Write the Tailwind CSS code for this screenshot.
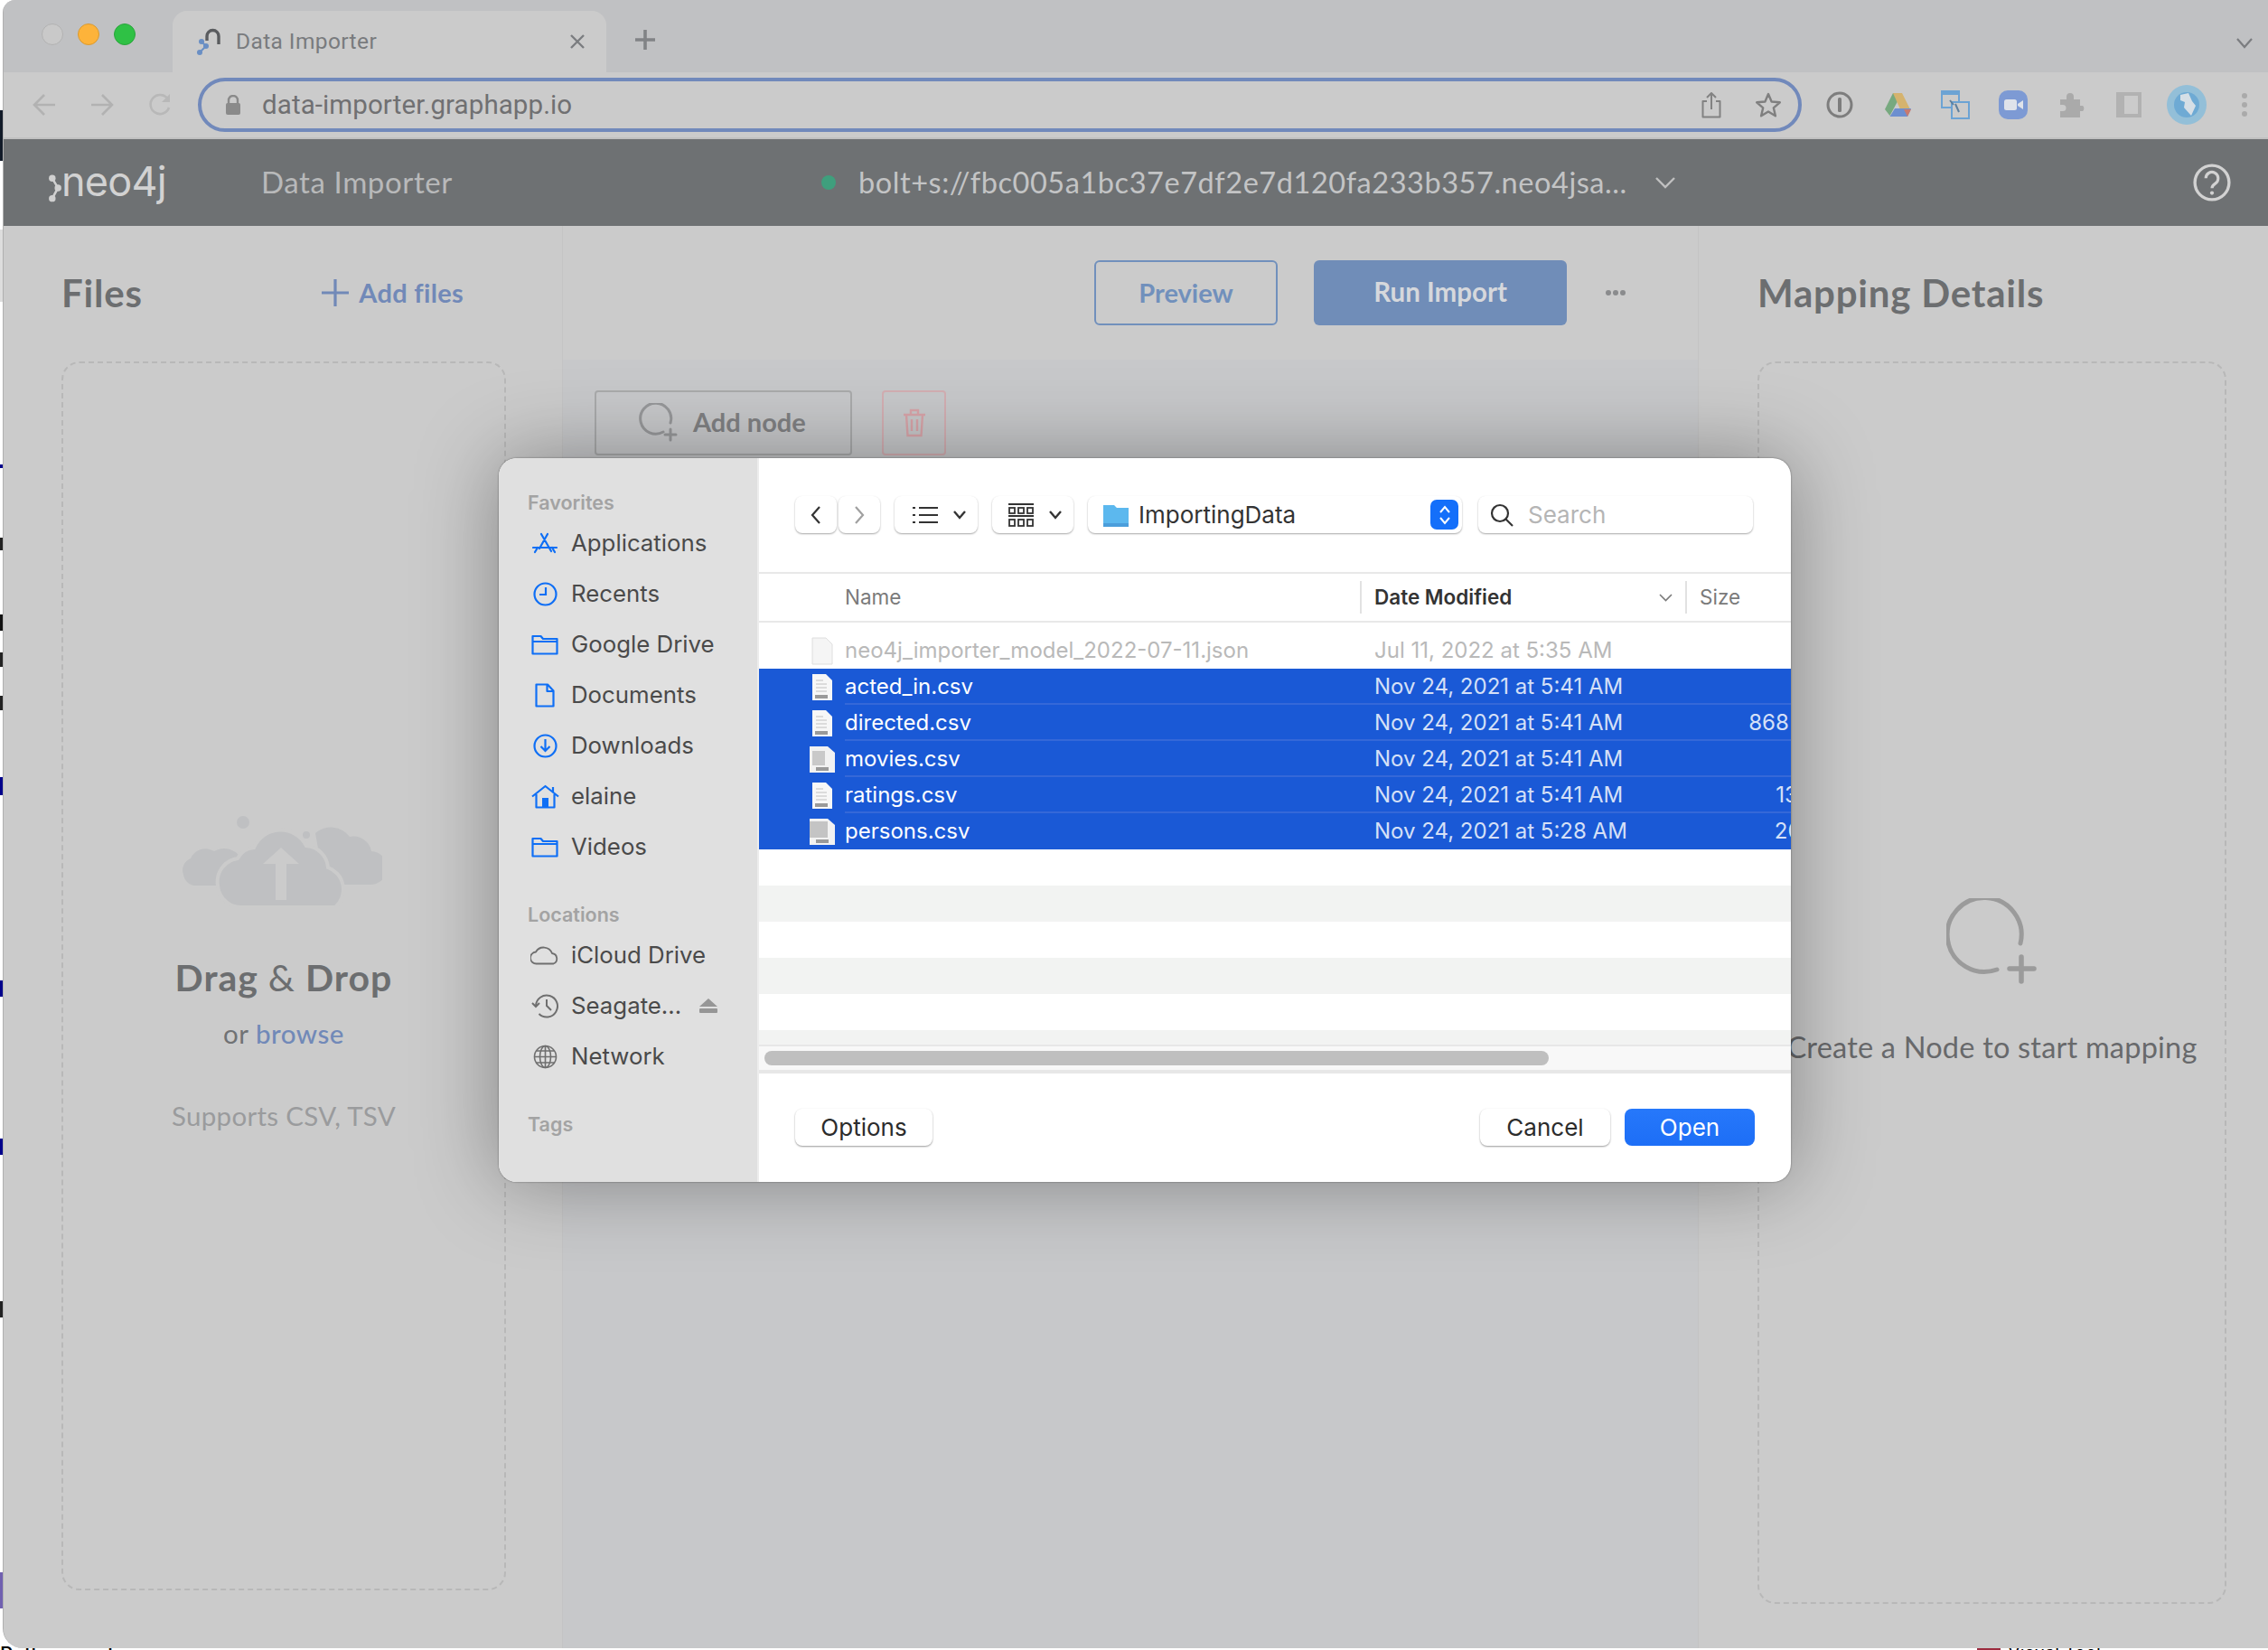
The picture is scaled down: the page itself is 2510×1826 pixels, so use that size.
<!DOCTYPE html>
<html>
<head>
<meta charset="utf-8">
<script src="https://cdn.jsdelivr.net/npm/@tailwindcss/browser@4"></script>
<title>Data Importer</title>
</head>
<body class="m-0">
<div class="relative w-[2510px] h-[1826px] overflow-hidden bg-white font-['Inter',sans-serif]">
  <!-- desktop fragments behind the window -->
  <div class="absolute left-0 top-[122px] w-[4px] h-[56px] bg-[#111a28]"></div>
  <div class="absolute left-0 top-[254px] w-[3px] h-[80px] bg-[#ddd]"></div>
  <div class="absolute left-0 top-[514px] w-[3px] h-[4px] bg-[#00008b]"></div>
  <div class="absolute left-0 top-[595px] w-[3px] h-[14px] bg-[#222]"></div>
  <div class="absolute left-0 top-[680px] w-[3px] h-[18px] bg-[#111]"></div>
  <div class="absolute left-0 top-[722px] w-[3px] h-[16px] bg-[#222]"></div>
  <div class="absolute left-0 top-[770px] w-[3px] h-[16px] bg-[#222]"></div>
  <div class="absolute left-0 top-[860px] w-[3px] h-[20px] bg-[#00008b]"></div>
  <div class="absolute left-0 top-[1085px] w-[3px] h-[18px] bg-[#00008b]"></div>
  <div class="absolute left-0 top-[1260px] w-[3px] h-[18px] bg-[#00008b]"></div>
  <div class="absolute left-0 top-[1440px] w-[3px] h-[18px] bg-[#222]"></div>
  <div class="absolute left-0 top-[1740px] w-[3px] h-[40px] bg-[#7060b0]"></div>
  <div class="absolute left-0 bottom-0 w-[180px] h-[5px] overflow-hidden"><div class="-mt-[2px] text-[22px] leading-[22px] text-black font-medium whitespace-nowrap">Python packages</div></div>
  <div class="absolute left-[2188px] bottom-0 w-[140px] h-[5px] overflow-hidden flex gap-2"><div class="w-[26px] h-[5px] bg-[#9c2b3f]"></div><div class="-mt-[2px] text-[20px] leading-[20px] text-black whitespace-nowrap">Visual Tool</div></div>

  <!-- browser window -->
  <div class="absolute left-[3px] top-0 w-[2507px] h-[1824px] rounded-bl-[22px] rounded-tl-[14px] overflow-hidden flex flex-col bg-[#cbcbcb] border-l border-[#b0b0b0]">
    <!-- tab strip -->
    <div class="h-[80px] shrink-0 bg-[#c0c1c3] flex items-end font-['Roboto',sans-serif]">
      <div class="flex gap-[16px] pl-[42px] pb-[30px]">
        <div class="w-[24px] h-[24px] rounded-full bg-[#c9c9c9] border border-[#b2b2b2]"></div>
        <div class="w-[24px] h-[24px] rounded-full bg-[#fdb33a] border border-[#d99a30]"></div>
        <div class="w-[24px] h-[24px] rounded-full bg-[#2fc145] border border-[#2aa53c]"></div>
      </div>
      <div class="ml-[41px] w-[480px] h-[68px] bg-[#cbcbcb] rounded-t-[16px] flex items-center pl-[26px] pr-[23px]">
        <svg class="w-[28px] h-[30px] shrink-0" viewBox="0 0 28 30" fill="none"><path d="M12 14V9a6.500 6.500 0 0 1 13 0v9" stroke="#5a5c5f" stroke-width="3.400"/><circle cx="6" cy="15" r="3" fill="#6a8fc4"/><circle cx="11" cy="20" r="3" fill="#6a8fc4"/><circle cx="4" cy="27" r="3" fill="#6a8fc4"/><path d="M6 15l5 5-7 7" stroke="#6a8fc4" stroke-width="2"/></svg>
        <span class="ml-[16px] text-[24.500px] text-[#797b7e] flex-1 tracking-[0.4px]">Data Importer</span>
        <svg class="w-[18px] h-[18px]" viewBox="0 0 18 18"><path d="M2 2l14 14M16 2L2 16" stroke="#7b7d80" stroke-width="2.400"/></svg>
      </div>
      <svg class="ml-[31px] mb-[24px] w-[24px] h-[24px]" viewBox="0 0 24 24"><path d="M12 1v22M1 12h22" stroke="#818386" stroke-width="3.600"/></svg>
      <div class="flex-1"></div>
      <svg class="mr-[17px] mb-[26px] w-[18px] h-[12px]" viewBox="0 0 18 12" fill="none"><path d="M1 1l8 9 8-9" stroke="#7b7d80" stroke-width="2.200"/></svg>
    </div>
    <!-- toolbar -->
    <div class="h-[74px] shrink-0 bg-[#cbcbcb] border-b-[2px] border-[#c0c0c0] flex items-center font-['Roboto',sans-serif]">
      <div class="flex shrink-0 items-center gap-[38px] pl-[32px] w-[215px]">
        <svg class="w-[26px] h-[26px]" viewBox="0 0 26 26" fill="none"><path d="M25 13H2M13 2L2 13l11 11" stroke="#b2b2b2" stroke-width="2.600"/></svg>
        <svg class="w-[26px] h-[26px]" viewBox="0 0 26 26" fill="none"><path d="M1 13h23M13 2l11 11-11 11" stroke="#b2b2b2" stroke-width="2.600"/></svg>
        <svg class="w-[26px] h-[26px]" viewBox="0 0 26 26" fill="none"><path d="M23 16a10.500 10.500 0 1 1-1-9" stroke="#b8b8b8" stroke-width="2.600"/><path d="M24 1v9h-9z" fill="#b8b8b8"/></svg>
      </div>
      <div class="w-[1775px] h-[60px] shrink-0 rounded-full border-[4px] border-[#7189bb] flex items-center pl-[26px] pr-[18px]">
        <svg class="w-[18px] h-[22px] shrink-0" viewBox="0 0 18 22"><path d="M4 10V6a5 5 0 0 1 10 0v4" fill="none" stroke="#8a8a8a" stroke-width="2.400"/><rect x="1" y="9" width="16" height="13" rx="2" fill="#8a8a8a"/></svg>
        <span class="ml-[23px] text-[29.500px] text-[#707072] flex-1 tracking-[0.1px]">data-importer.graphapp.io</span>
        <svg class="w-[24px] h-[30px]" viewBox="0 0 24 30" fill="none"><path d="M7 11H2.500v17.500h19V11H17M12 20V2M7 7l5-5 5 5" stroke="#828282" stroke-width="2" stroke-linejoin="round"/></svg>
        <svg class="ml-[36px] w-[30px] h-[30px]" viewBox="0 0 30 30" fill="none"><path d="M15 3l3.600 8.500 9.200.8-7 6 2.100 9L15 22.500 7.100 27.300l2.100-9-7-6 9.200-.8z" stroke="#7f7f7f" stroke-width="2.400" stroke-linejoin="round"/></svg>
      </div>
      <div class="flex shrink-0 items-center pl-[10px]">
        <div class="w-[64px] flex justify-center"><svg class="w-[30px] h-[30px]" viewBox="0 0 30 30" fill="none"><circle cx="15" cy="15" r="13" stroke="#7d7d7d" stroke-width="3"/><rect x="13" y="7" width="4" height="16" rx="1.500" fill="#7d7d7d"/></svg></div>
        <div class="w-[64px] flex justify-center"><svg class="w-[30px] h-[28px]" viewBox="0 0 30 28"><path d="M10 1h10L13 14 6.500 26 1 19z" fill="#77a97f"/><path d="M10 1h10l9 18H18z" fill="#d5b36e"/><path d="M6.500 27L12 18h18l-4 9z" fill="#6d8fd0"/><path d="M30 19h-8l4 8z" fill="#c97a6e"/></svg></div>
        <div class="w-[64px] flex justify-center"><svg class="w-[32px] h-[32px]" viewBox="0 0 32 32" fill="none"><rect x="1" y="1" width="19" height="18" fill="#cbcbcb" stroke="#6ca3d4" stroke-width="2"/><rect x="1" y="1" width="19" height="4" fill="#6ca3d4"/><rect x="12" y="13" width="19" height="18" fill="#cbcbcb" stroke="#6ca3d4" stroke-width="2"/><path d="M10 11l4 5M16 15l4 9" stroke="#5e7f9c" stroke-width="2"/></svg></div>
        <div class="w-[64px] flex justify-center"><svg class="w-[32px] h-[32px]" viewBox="0 0 32 32"><rect width="32" height="32" rx="10" fill="#7d9ad4"/><rect x="6" y="10" width="14" height="12" rx="2.500" fill="#dfe3ea"/><path d="M21 15l6-4v10l-6-4z" fill="#dfe3ea"/></svg></div>
        <div class="w-[64px] flex justify-center"><svg class="w-[30px] h-[30px]" viewBox="0 0 30 30"><path d="M3 9h7V6a4 4 0 0 1 8 0v3h7v7h3a4 4 0 0 1 0 6h-3v7H3v-7h3a3.500 3.500 0 0 0 0-7H3z" fill="#aaaaaa"/></svg></div>
        <div class="w-[64px] flex justify-center"><div class="w-[28px] h-[28px] border-[4px] border-l-[9px] border-r-[4px] border-[#b2b2b2]"></div></div>
        <div class="w-[64px] flex justify-center"><svg class="w-[44px] h-[44px]" viewBox="0 0 44 44"><circle cx="22" cy="22" r="22" fill="#93bfd8"/><circle cx="22" cy="22" r="14" fill="#6eaad4"/><path d="M15 11l9-2 4 9 4 5-5 11-8-9 1-6-5-2z" fill="#d6dfe6"/></svg></div>
        <div class="w-[64px] flex justify-center"><div class="flex flex-col gap-[4px]"><div class="w-[6px] h-[6px] rounded-full bg-[#aaa]"></div><div class="w-[6px] h-[6px] rounded-full bg-[#aaa]"></div><div class="w-[6px] h-[6px] rounded-full bg-[#aaa]"></div></div></div>
      </div>
    </div>
    <!-- app header -->
    <div class="h-[96px] shrink-0 bg-[#6e7173] flex items-center font-['Lato',sans-serif]">
      <div class="w-[285px] pl-[49px] flex items-center">
        <svg class="w-[16px] h-[34px] mt-[14px]" viewBox="0 0 14 32"><circle cx="4" cy="5" r="3.500" fill="#d0d0d0"/><circle cx="10" cy="15" r="3.500" fill="#d0d0d0"/><circle cx="4" cy="26" r="3.500" fill="#d0d0d0"/><path d="M4 5l6 10-6 11" stroke="#d0d0d0" stroke-width="2.400" fill="none"/></svg>
        <span class="text-[45px] leading-none text-[#d2d2d2] tracking-[-0.8px] font-['Inter',sans-serif] font-normal -ml-[1px] -mt-[4px]">neo4j</span>
      </div>
      <span class="w-[620px] text-[33px] text-[#b8b9ba] tracking-[0.6px]">Data Importer</span>
      <div class="w-[16px] h-[16px] shrink-0 rounded-full bg-[#3f9f7d]"></div>
      <span class="ml-[25px] text-[32.500px] text-[#c3c4c5] tracking-[0.55px] whitespace-nowrap">bolt+s://fbc005a1bc37e7df2e7d120fa233b357.neo4jsa...</span>
      <svg class="ml-[30px] w-[24px] h-[14px]" viewBox="0 0 24 14" fill="none"><path d="M2 2l10 10L22 2" stroke="#c0c0c0" stroke-width="2.400"/></svg>
      <div class="flex-1"></div>
      <svg class="mr-[41px] w-[42px] h-[42px]" viewBox="0 0 40 40" fill="none"><circle cx="20" cy="20" r="18" stroke="#d2d2d2" stroke-width="3.200"/><path d="M13.500 15.500a6.500 6.500 0 1 1 10 5.500c-2.300 1.500-3.500 2.700-3.500 5" stroke="#d2d2d2" stroke-width="3"/><circle cx="20" cy="31" r="2" fill="#d2d2d2"/></svg>
    </div>
    <!-- three panels -->
    <div class="flex-1 flex min-h-0 font-['Lato',sans-serif]">
      <!-- files -->
      <div class="w-[619px] shrink-0 bg-[#cbcbcb] border-r border-[#c4c4c4] pl-[64px] pr-[61px] flex flex-col">
        <div class="h-[150px] flex items-center justify-between shrink-0 pb-[2px]">
          <span class="text-[42px] font-bold text-[#6c6e70] tracking-[0.8px]">Files</span>
          <div class="flex items-center gap-[10px] mr-[48px] text-[#7189b8]">
            <svg class="w-[32px] h-[32px]" viewBox="0 0 32 32"><path d="M16 1v30M1 16h30" stroke="#7189b8" stroke-width="3.200"/></svg>
            <span class="text-[29px] font-bold tracking-[0.3px]">Add files</span>
          </div>
        </div>
        <div class="h-[1360px] w-[492px] rounded-[20px] border-2 border-dashed border-[#b8b8b8] flex flex-col items-center pt-[500px]">
          <svg class="w-[224px] h-[102px] -ml-[6px]" viewBox="0 0 224 102" fill="#bfc0c2">
            <circle cx="70" cy="8" r="7"/><circle cx="140" cy="22" r="4"/>
            <path d="M4 66a14 14 0 0 1 8-18 18 18 0 0 1 26-8 22 22 0 0 1 30 8l-10 30H18A14 14 0 0 1 4 66z"/>
            <path d="M150 20a26 26 0 0 1 38 4 20 20 0 0 1 24 16 15 15 0 0 1-2 37h-50z"/>
            <path d="M42 78a26 26 0 0 1 22-30 22 22 0 0 1 18-12 32 32 0 0 1 58-2 26 26 0 0 1 24 24 26 26 0 0 1 8 44H70a26 26 0 0 1-28-24z" stroke="#cbcbcb" stroke-width="4"/>
            <path d="M106 94V54h-14l20-18 20 18h-14v40z" fill="#cbcbcb"/>
          </svg>
          <div class="mt-[53px] text-[41px] leading-[50px] text-[#6c6e70] font-bold tracking-[1px]">Drag <span class="font-normal">&amp;</span> Drop</div>
          <div class="mt-[19px] text-[29.500px] leading-[36px] text-[#707274] tracking-[0.5px]">or <span class="text-[#7189b8] font-medium">browse</span></div>
          <div class="mt-[55px] text-[29.500px] leading-[36px] text-[#9a9b9d] tracking-[0.3px]">Supports CSV, TSV</div>
        </div>
      </div>
      <!-- canvas -->
      <div class="w-[1256px] shrink-0 flex flex-col">
        <div class="h-[148px] shrink-0 bg-[#cbcbcb] flex items-center pl-[588px] pb-[1px]">
          <div class="w-[203px] h-[72px] rounded-[6px] border-2 border-[#7190bc] flex items-center justify-center text-[29px] font-bold text-[#7190bc]">Preview</div>
          <div class="ml-[40px] w-[280px] h-[72px] rounded-[6px] bg-[#708db8] flex items-center justify-center text-[29.500px] font-bold text-[#d6d8dc]">Run Import</div>
          <div class="ml-[43px] flex gap-[2px]"><div class="w-[6px] h-[6px] rounded-full bg-[#8a8b8d]"></div><div class="w-[6px] h-[6px] rounded-full bg-[#8a8b8d]"></div><div class="w-[6px] h-[6px] rounded-full bg-[#8a8b8d]"></div></div>
        </div>
        <div class="flex-1 bg-[#c7c8ca] pl-[35px] pt-[34px] flex items-start gap-[33px]">
          <div class="w-[285px] h-[72px] rounded-[4px] border-2 border-[#a9aaab] flex items-center pl-[46px] gap-[17px]">
            <svg class="w-[44px] h-[44px]" viewBox="0 0 44 44" fill="none"><path d="M28 32a17 17 0 1 1 8-10" stroke="#97989a" stroke-width="3" stroke-linecap="round"/><path d="M36 29v12M30 35h12" stroke="#97989a" stroke-width="3" stroke-linecap="round"/></svg>
            <span class="text-[29px] font-bold text-[#808183] -mt-[2px]">Add node</span>
          </div>
          <div class="w-[71px] h-[72px] rounded-[4px] border-2 border-[#d3aeb2] flex items-center justify-center">
            <svg class="w-[26px] h-[32px]" viewBox="0 0 26 32" fill="none" stroke="#d8a4a9" stroke-width="2.400"><path d="M1 7h24M9 7V2h8v5M4 7l1.500 23h15L22 7M10 12v13M16 12v13"/></svg>
          </div>
        </div>
      </div>
      <!-- mapping -->
      <div class="flex-1 bg-[#cbcbcb] border-l border-[#c4c4c4] pl-[65px] flex flex-col">
        <div class="h-[150px] flex items-center shrink-0 pb-[2px]"><span class="text-[42px] font-bold text-[#6c6e70] tracking-[0.8px]">Mapping Details</span></div>
        <div class="w-[519px] h-[1375px] rounded-[20px] border-2 border-dashed border-[#b8b8b8] flex flex-col items-center pt-[592px]">
          <svg class="w-[100px] h-[100px] -ml-[2px]" viewBox="0 0 100 100" fill="none"><path d="M60 80a41 41 0 1 1 26-29" stroke="#9b9b9b" stroke-width="5" stroke-linecap="round" transform="translate(-4 -1)"/><path d="M83 65v27M70 78h27" stroke="#9b9b9b" stroke-width="5.500" stroke-linecap="round"/></svg>
          <div class="mt-[43px] text-[32.500px] leading-[44px] text-[#68696b] tracking-[0.2px] whitespace-nowrap">Create a Node to start mapping</div>
        </div>
      </div>
    </div>
  </div>

  <!-- file dialog -->
  <div class="absolute left-[552px] top-[507px] w-[1430px] h-[801px] rounded-[20px] overflow-hidden flex bg-white shadow-[0_0_90px_rgba(0,0,0,0.35),0_0_2px_rgba(0,0,0,0.5)] text-[#4a4a4a]">
    <!-- sidebar -->
    <div class="w-[288px] shrink-0 bg-[#e0e0e0] border-r-2 border-[#ededed] pl-[32px] pt-[35px] flex flex-col">
      <div class="text-[21.500px] leading-[28px] font-semibold text-[#a3a3a3]">Favorites</div>
      <div class="mt-[3px] flex flex-col text-[25.800px]">
        <div class="h-[56px] flex items-center"><div class="w-[48px] shrink-0 pr-[10px] flex justify-center"><svg class="w-[28px] h-[24px]" viewBox="0 0 28 24" fill="none" stroke="#0f6ff5" stroke-width="2.200" stroke-linecap="round"><path d="M10 2l11 19M17 2L8 18M1 17h26M3 22l3-5M25 22l-3-5"/></svg></div><span>Applications</span></div>
        <div class="h-[56px] flex items-center"><div class="w-[48px] shrink-0 pr-[10px] flex justify-center"><svg class="w-[27px] h-[27px]" viewBox="0 0 27 27" fill="none" stroke="#0f6ff5" stroke-width="2.200"><circle cx="13.500" cy="13.500" r="12"/><path d="M14 6v8H7"/></svg></div><span>Recents</span></div>
        <div class="h-[56px] flex items-center"><div class="w-[48px] shrink-0 pr-[10px] flex justify-center"><svg class="w-[30px] h-[23px]" viewBox="0 0 30 23" fill="none" stroke="#0f6ff5" stroke-width="2.200" stroke-linejoin="round"><path d="M1.500 21.500V2h9l2.500 3h15.500v16.500zM1.500 8h27"/></svg></div><span>Google Drive</span></div>
        <div class="h-[56px] flex items-center"><div class="w-[48px] shrink-0 pr-[10px] flex justify-center"><svg class="w-[22px] h-[27px]" viewBox="0 0 22 27" fill="none" stroke="#0f6ff5" stroke-width="2.200" stroke-linejoin="round"><path d="M1.500 25.500V1.500H14l6.500 7v17zM13.500 1.500V9h7"/></svg></div><span>Documents</span></div>
        <div class="h-[56px] flex items-center"><div class="w-[48px] shrink-0 pr-[10px] flex justify-center"><svg class="w-[27px] h-[27px]" viewBox="0 0 27 27" fill="none" stroke="#0f6ff5" stroke-width="2.200"><circle cx="13.500" cy="13.500" r="12"/><path d="M13.500 6v13M8.500 14l5 5 5-5"/></svg></div><span>Downloads</span></div>
        <div class="h-[56px] flex items-center"><div class="w-[48px] shrink-0 pr-[10px] flex justify-center"><svg class="w-[31px] h-[27px]" viewBox="0 0 31 27" fill="none" stroke="#0f6ff5" stroke-width="2.200" stroke-linejoin="round"><path d="M1 13.500L15.500 2 30 13.500M5.500 11v14.500h20V11M24 3v6"/><rect x="12" y="15" width="7" height="10" fill="#0f6ff5" stroke="none"/></svg></div><span>elaine</span></div>
        <div class="h-[56px] flex items-center"><div class="w-[48px] shrink-0 pr-[10px] flex justify-center"><svg class="w-[30px] h-[23px]" viewBox="0 0 30 23" fill="none" stroke="#0f6ff5" stroke-width="2.200" stroke-linejoin="round"><path d="M1.500 21.500V2h9l2.500 3h15.500v16.500zM1.500 8h27"/></svg></div><span>Videos</span></div>
      </div>
      <div class="mt-[33px] text-[21.500px] leading-[28px] font-semibold text-[#a3a3a3]">Locations</div>
      <div class="mt-[3px] flex flex-col text-[25.800px]">
        <div class="h-[56px] flex items-center"><div class="w-[48px] shrink-0 pr-[10px] flex justify-center"><svg class="w-[32px] h-[22px]" viewBox="0 0 32 22" fill="none" stroke="#6f6f6f" stroke-width="1.800"><path d="M7 20.500a6.500 6.500 0 0 1-1-13 10 10 0 0 1 18 1.500 6 6 0 0 1 1.500 11.500z"/></svg></div><span>iCloud Drive</span></div>
        <div class="h-[56px] flex items-center"><div class="w-[48px] shrink-0 pr-[10px] flex justify-center"><svg class="w-[30px] h-[28px]" viewBox="0 0 30 28" fill="none" stroke="#6f6f6f" stroke-width="2"><path d="M5 14a12 12 0 1 1 3.500 9"/><path d="M1 11l4 4 4-4"/><path d="M17 7v7l5 5"/></svg></div><span class="w-[118px]">Seagate...</span><svg class="ml-[24px] w-[20px] h-[16px]" viewBox="0 0 20 16" fill="#969696"><path d="M10 0l10 9H0z"/><rect x="0" y="11" width="20" height="5" rx="1"/></svg></div>
        <div class="h-[56px] flex items-center"><div class="w-[48px] shrink-0 pr-[10px] flex justify-center"><svg class="w-[27px] h-[27px]" viewBox="0 0 27 27" fill="none" stroke="#6f6f6f" stroke-width="1.600"><circle cx="13.500" cy="13.500" r="12"/><ellipse cx="13.500" cy="13.500" rx="6" ry="12"/><path d="M1.500 13.500h24M4 7h19M4 20h19M13.500 1.500v24"/></svg></div><span>Network</span></div>
      </div>
      <div class="mt-[33px] text-[21.500px] leading-[28px] font-semibold text-[#a3a3a3]">Tags</div>
    </div>
    <!-- file browser -->
    <div class="flex-1 min-w-0 flex flex-col">
      <div class="h-[126px] shrink-0 flex items-center pl-[40px] pb-[1px] text-[26px]">
        <div class="w-[46px] h-[41px] rounded-[8px] bg-white shadow-[0_1px_2px_rgba(0,0,0,0.35)] flex items-center justify-center"><svg class="w-[12px] h-[22px]" viewBox="0 0 12 22" fill="none"><path d="M10 2L2 11l8 9" stroke="#333" stroke-width="2.200"/></svg></div>
        <div class="ml-[2px] w-[46px] h-[41px] rounded-[8px] bg-white shadow-[0_1px_2px_rgba(0,0,0,0.35)] flex items-center justify-center"><svg class="w-[12px] h-[22px]" viewBox="0 0 12 22" fill="none"><path d="M2 2l8 9-8 9" stroke="#a0a0a0" stroke-width="2.200"/></svg></div>
        <div class="ml-[16px] w-[92px] h-[41px] rounded-[8px] bg-white shadow-[0_1px_2px_rgba(0,0,0,0.35)] flex items-center pl-[20px] gap-[17px]"><svg class="w-[28px] h-[20px]" viewBox="0 0 28 20" fill="none" stroke="#333" stroke-width="2.200"><path d="M7 2h21M7 10h21M7 18h21M0 2h3M0 10h3M0 18h3"/></svg><svg class="w-[14px] h-[10px]" viewBox="0 0 14 10" fill="none"><path d="M1 1l6 7 6-7" stroke="#333" stroke-width="2.400"/></svg></div>
        <div class="ml-[16px] w-[90px] h-[41px] rounded-[8px] bg-white shadow-[0_1px_2px_rgba(0,0,0,0.35)] flex items-center pl-[18px] gap-[17px]"><svg class="w-[28px] h-[28px]" viewBox="0 0 28 28" fill="none" stroke="#333" stroke-width="1.800"><path d="M0 2h28M0 15h28"/><rect x="1" y="6" width="6" height="6"/><rect x="11" y="6" width="6" height="6"/><rect x="21" y="6" width="6" height="6"/><rect x="1" y="19" width="6" height="7"/><rect x="11" y="19" width="6" height="7"/><rect x="21" y="19" width="6" height="7"/></svg><svg class="w-[14px] h-[10px]" viewBox="0 0 14 10" fill="none"><path d="M1 1l6 7 6-7" stroke="#333" stroke-width="2.400"/></svg></div>
        <div class="ml-[16px] w-[414px] h-[41px] rounded-[8px] bg-white shadow-[0_1px_2px_rgba(0,0,0,0.35)] flex items-center pl-[17px] pr-[4px]">
          <svg class="w-[28px] h-[26px] shrink-0" viewBox="0 0 28 26"><path d="M0 2h12l3 3h13v21H0z" fill="#5cb8ee"/><path d="M0 22h28v4H0z" fill="#4b9edb"/></svg>
          <span class="ml-[11px] flex-1 text-[#333]">ImportingData</span>
          <div class="w-[31px] h-[33px] rounded-[7px] bg-[#146ffa] flex flex-col items-center justify-center gap-[4px]"><svg class="w-[12px] h-[9px]" viewBox="0 0 12 9" fill="none"><path d="M1 8l5-6 5 6" stroke="#fff" stroke-width="2"/></svg><svg class="w-[12px] h-[9px]" viewBox="0 0 12 9" fill="none"><path d="M1 1l5 6 5-6" stroke="#fff" stroke-width="2"/></svg></div>
        </div>
        <div class="ml-[18px] w-[304px] h-[41px] rounded-[8px] bg-white shadow-[0_1px_2px_rgba(0,0,0,0.35)] flex items-center pl-[13px]">
          <svg class="w-[26px] h-[26px]" viewBox="0 0 26 26" fill="none" stroke="#333" stroke-width="2.200"><circle cx="11" cy="11" r="9"/><path d="M17 17l8 8"/></svg>
          <span class="ml-[16px] text-[#b5b5b5]">Search</span>
        </div>
      </div>
      <!-- column header -->
      <div class="h-[56px] shrink-0 border-y-2 border-[#e8e8e8] flex items-center text-[22.500px] text-[#7a7a7a]">
        <div class="w-[665px] pl-[95px]">Name</div>
        <div class="w-[362px] h-[36px] border-x-2 border-[#e2e2e2] pl-[14px] pr-[14px] flex items-center justify-between"><span class="font-semibold text-[#333]">Date Modified</span><svg class="w-[15px] h-[9px]" viewBox="0 0 15 9" fill="none"><path d="M1 1l6.500 6.500L14 1" stroke="#7a7a7a" stroke-width="1.600"/></svg></div>
        <div class="pl-[14px]">Size</div>
      </div>
      <!-- rows -->
      <div class="flex-1 flex flex-col text-[24px] overflow-hidden">
        <div class="h-[51px] shrink-0 flex items-center pt-[11px] text-[#b9b9b9]">
          <div class="w-[95px] shrink-0 pl-[58px]"><svg class="w-[24px] h-[31px]" viewBox="0 0 24 31"><path d="M1 1h15l7 7v22H1z" fill="#f5f5f5" stroke="#dedede"/></svg></div>
          <div class="w-[586px] shrink-0 whitespace-nowrap">neo4j_importer_model_2022-07-11.json</div>
          <div class="whitespace-nowrap">Jul 11, 2022 at 5:35 AM</div>
        </div>
        <div class="h-[200px] shrink-0 bg-[#1a59d6] flex flex-col text-white">
          <div class="h-[40px] flex items-center"><div class="w-[95px] shrink-0 pl-[58px]"><svg class="w-[24px] h-[31px]" viewBox="0 0 24 31"><path d="M1 1h15l7 7v22H1z" fill="#f7f7f7"/><path d="M5 8h8M5 12h12M5 16h12M5 20h12" stroke="#c0c0c0"/><rect x="4" y="24" width="14" height="4" fill="#9a9a9a"/></svg></div><div class="w-[586px] shrink-0 h-full pt-[2px] flex items-center border-b-2 border-[#3568d8]">acted_in.csv</div><div class="flex-1 h-full pt-[2px] flex items-center border-b-2 border-[#3568d8] text-[#d5e0f7] whitespace-nowrap">Nov 24, 2021 at 5:41 AM</div></div>
          <div class="h-[40px] flex items-center"><div class="w-[95px] shrink-0 pl-[58px]"><svg class="w-[24px] h-[31px]" viewBox="0 0 24 31"><path d="M1 1h15l7 7v22H1z" fill="#f7f7f7"/><path d="M5 8h8M5 12h12M5 16h12M5 20h12" stroke="#c0c0c0"/><rect x="4" y="24" width="14" height="4" fill="#9a9a9a"/></svg></div><div class="w-[586px] shrink-0 h-full pt-[2px] flex items-center border-b-2 border-[#3568d8]">directed.csv</div><div class="flex-1 h-full pt-[2px] flex items-center border-b-2 border-[#3568d8] text-[#d5e0f7] whitespace-nowrap">Nov 24, 2021 at 5:41 AM<span class="ml-[139px]">868 KB</span></div></div>
          <div class="h-[40px] flex items-center"><div class="w-[95px] shrink-0 pl-[55px]"><svg class="w-[30px] h-[31px]" viewBox="0 0 30 31"><path d="M1 1h20l8 7v22H1z" fill="#f2f2f2"/><path d="M4 6h14v16H4z" fill="#c9c9c9"/><rect x="8" y="24" width="14" height="4" fill="#9a9a9a"/></svg></div><div class="w-[586px] shrink-0 h-full pt-[2px] flex items-center border-b-2 border-[#3568d8]">movies.csv</div><div class="flex-1 h-full pt-[2px] flex items-center border-b-2 border-[#3568d8] text-[#d5e0f7] whitespace-nowrap">Nov 24, 2021 at 5:41 AM</div></div>
          <div class="h-[40px] flex items-center"><div class="w-[95px] shrink-0 pl-[58px]"><svg class="w-[24px] h-[31px]" viewBox="0 0 24 31"><path d="M1 1h15l7 7v22H1z" fill="#f7f7f7"/><path d="M5 8h8M5 12h12M5 16h12M5 20h12" stroke="#c0c0c0"/><rect x="4" y="24" width="14" height="4" fill="#9a9a9a"/></svg></div><div class="w-[586px] shrink-0 h-full pt-[2px] flex items-center border-b-2 border-[#3568d8]">ratings.csv</div><div class="flex-1 h-full pt-[2px] flex items-center border-b-2 border-[#3568d8] text-[#d5e0f7] whitespace-nowrap">Nov 24, 2021 at 5:41 AM<span class="ml-[169px]">13 MB</span></div></div>
          <div class="h-[40px] flex items-center"><div class="w-[95px] shrink-0 pl-[55px]"><svg class="w-[30px] h-[31px]" viewBox="0 0 30 31"><path d="M1 1h20l8 7v22H1z" fill="#f2f2f2"/><path d="M1 4h20v18H1z" fill="#c4c4c4"/><rect x="8" y="24" width="14" height="4" fill="#9a9a9a"/></svg></div><div class="w-[586px] shrink-0 h-full flex items-center">persons.csv</div><div class="flex-1 h-full flex items-center text-[#d5e0f7] whitespace-nowrap">Nov 24, 2021 at 5:28 AM<span class="ml-[163px]">20 MB</span></div></div>
        </div>
        <div class="h-[40px] shrink-0"></div>
        <div class="h-[40px] shrink-0 bg-[#f2f3f2]"></div>
        <div class="h-[40px] shrink-0"></div>
        <div class="h-[40px] shrink-0 bg-[#f2f3f2]"></div>
        <div class="h-[40px] shrink-0"></div>
        <div class="h-[16px] shrink-0 bg-[#f2f3f2]"></div>
        <div class="h-[32px] shrink-0 bg-[#f8f8f8] border-t-2 border-b-4 border-[#e7e7e7] pl-[6px] flex items-center"><div class="w-[868px] h-[16px] rounded-full bg-[#bfbfbf]"></div></div>
        <div class="flex-1 flex items-start justify-between pl-[40px] pr-[40px] pt-[39px] text-[26px] text-[#2c2c2c]">
          <div class="w-[152px] h-[41px] rounded-[8px] bg-white shadow-[0_1px_2px_rgba(0,0,0,0.4)] flex items-center justify-center">Options</div>
          <div class="flex gap-[16px]">
            <div class="w-[144px] h-[41px] rounded-[8px] bg-white shadow-[0_1px_2px_rgba(0,0,0,0.4)] flex items-center justify-center">Cancel</div>
            <div class="w-[144px] h-[41px] rounded-[8px] bg-gradient-to-b from-[#2678fb] to-[#1d6ef6] text-white flex items-center justify-center">Open</div>
          </div>
        </div>
      </div>
    </div>
  </div>
</div>
</body>
</html>
